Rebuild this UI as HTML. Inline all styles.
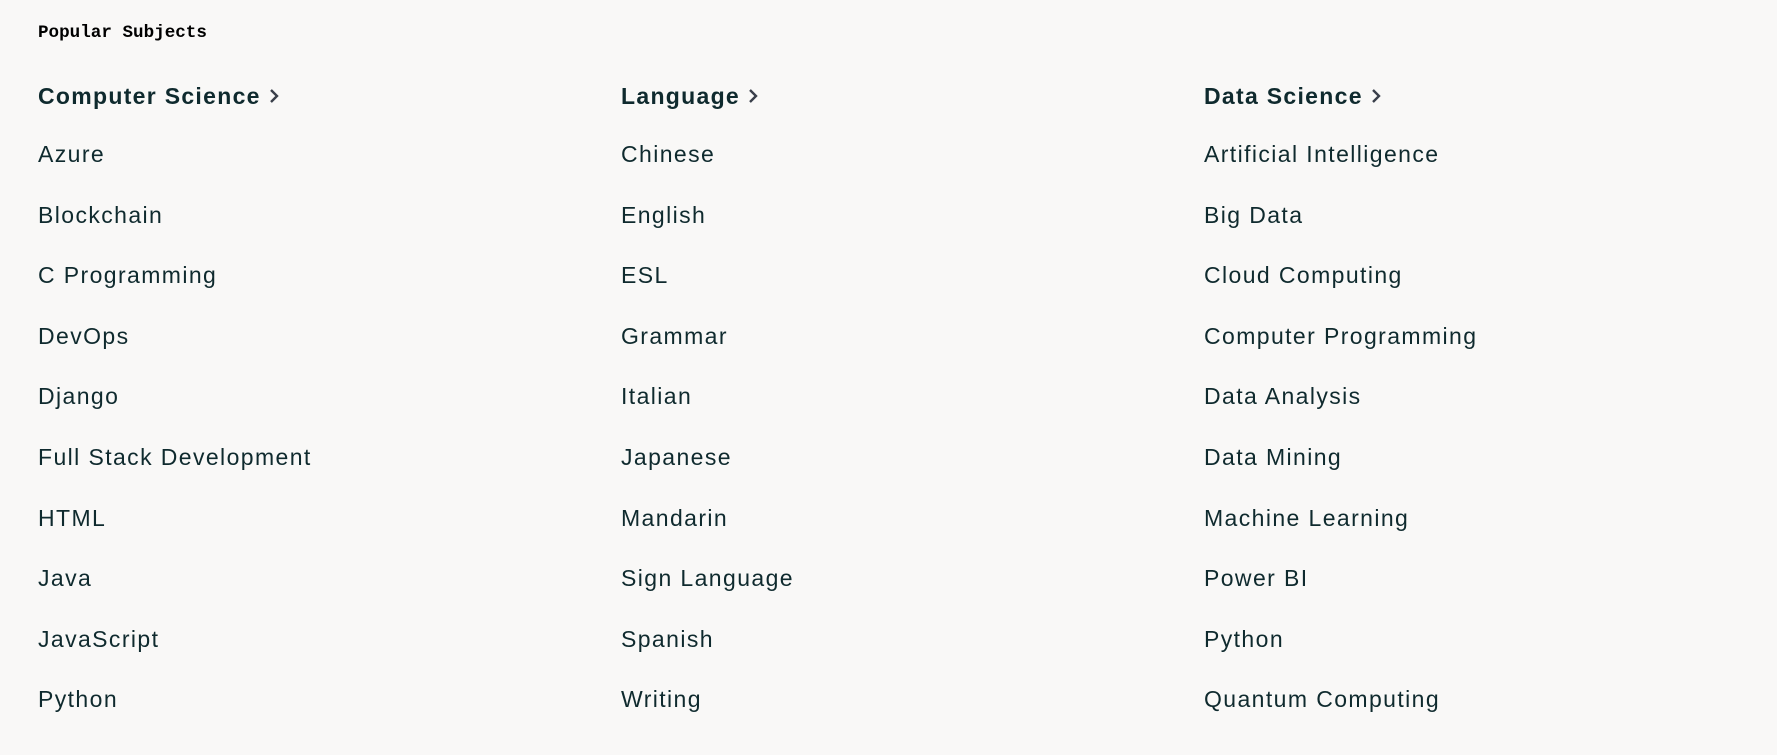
<!DOCTYPE html>
<html><head><style>
body{margin:0;background:#f9f8f7;width:1777px;height:755px;overflow:hidden;font-family:"Liberation Sans",sans-serif;color:#0f2a2e}
.t{position:absolute;left:38px;top:21px;font:bold 17.6px/24px "Liberation Mono",monospace;color:#000}
.col{position:absolute;top:0}
.h{position:absolute;top:81px;font-weight:bold;font-size:23px;letter-spacing:1.3px;white-space:nowrap;line-height:30px}
.h svg{vertical-align:middle;margin-left:8px;margin-top:-3px}
.i{position:absolute;font-size:23px;letter-spacing:1.4px;line-height:30px;white-space:nowrap}
</style></head><body>
<div class="t">Popular Subjects</div>
<div id="c"></div>
<script>
var cols=[[38,"Computer Science",["Azure","Blockchain","C Programming","DevOps","Django","Full Stack Development","HTML","Java","JavaScript","Python"]],
[621,"Language",["Chinese","English","ESL","Grammar","Italian","Japanese","Mandarin","Sign Language","Spanish","Writing"]],
[1204,"Data Science",["Artificial Intelligence","Big Data","Cloud Computing","Computer Programming","Data Analysis","Data Mining","Machine Learning","Power BI","Python","Quantum Computing"]]];
var h="";
cols.forEach(function(c){
h+='<div class="h" style="left:'+c[0]+'px">'+c[1]+'<svg width="10" height="16" viewBox="0 0 10 16"><path d="M2 2l6 6-6 6" fill="none" stroke="#3a3f4a" stroke-width="2.4"/></svg></div>';
c[2].forEach(function(t,k){h+='<div class="i" style="left:'+c[0]+'px;top:'+(139+k*60.6)+'px">'+t+'</div>';});
});
document.getElementById("c").innerHTML=h;
</script>
</body></html>
